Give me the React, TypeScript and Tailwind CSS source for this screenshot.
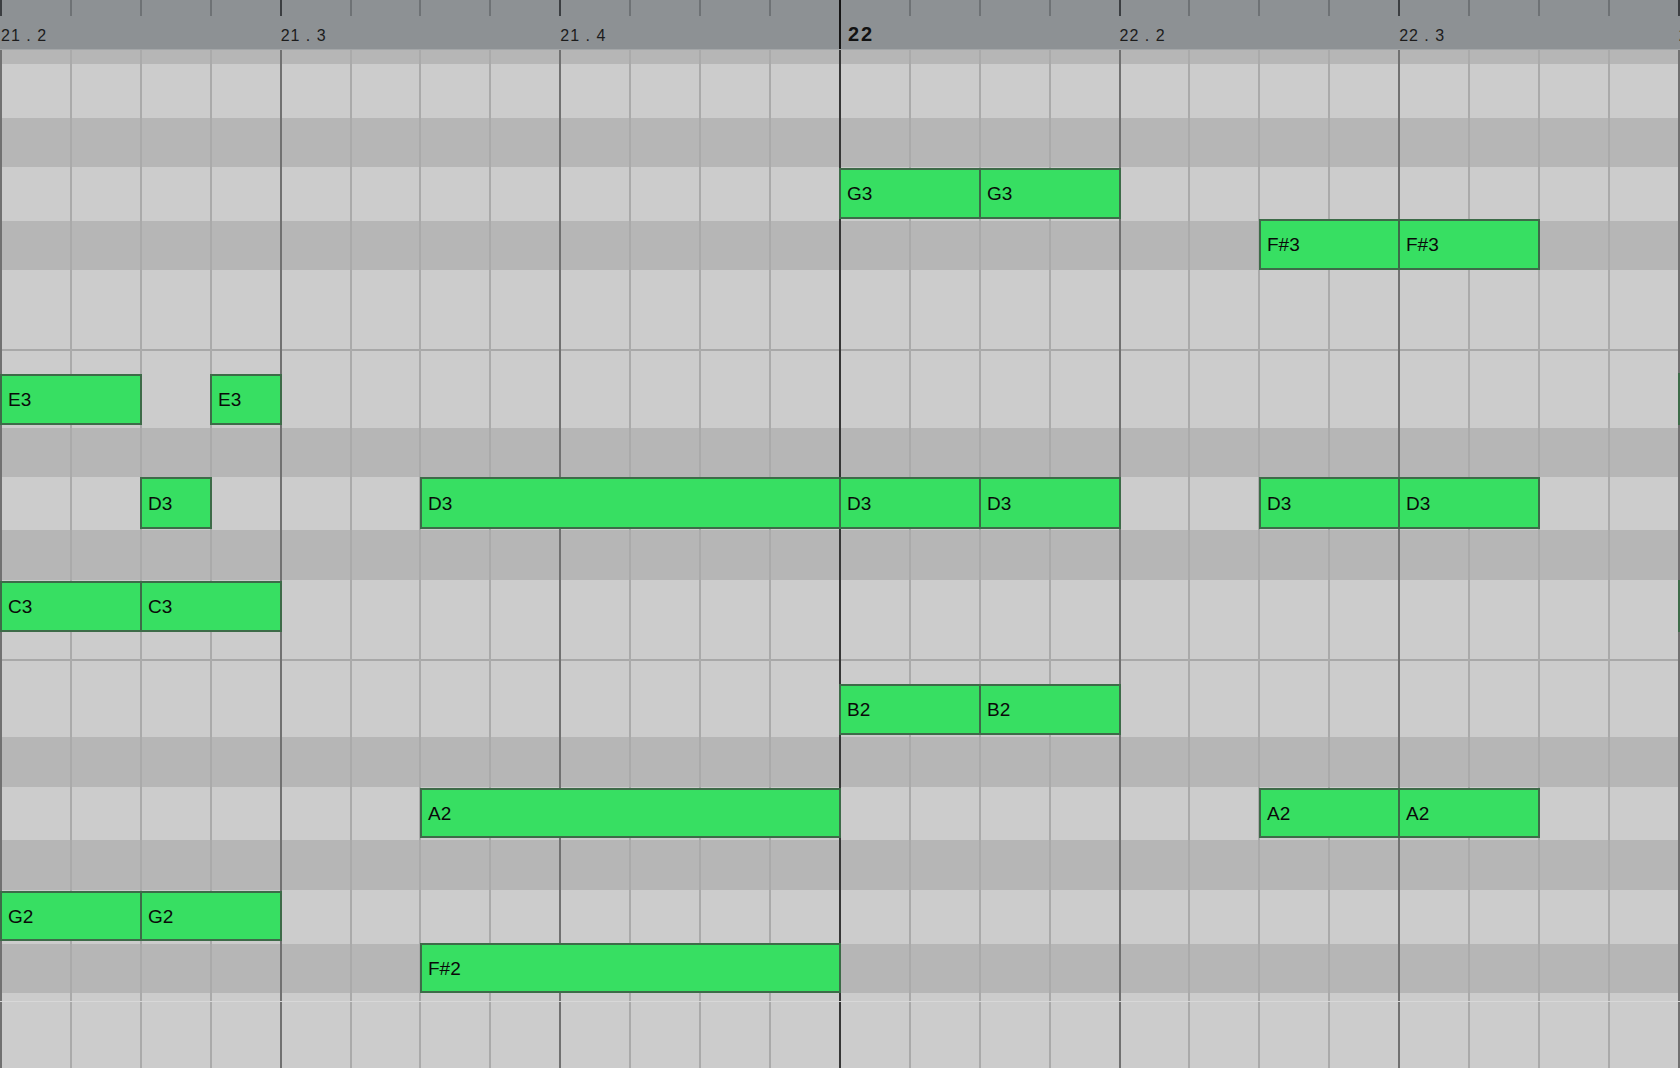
import React from 'react';

// one sixteenth on screen
const STEP = 69.92;
const COLS = Array.from({ length: 25 }, (_, i) => i);

const labels: Record<number, string> = {
    0: '21 . 2',
    4: '21 . 3',
    8: '21 . 4',
    12: '22',
    16: '22 . 2',
    20: '22 . 3',
    24: '22 . 4',
};

// pitch lanes under the ruler, top to bottom
const lanes = [
    { h: 'h-[14px]', bg: 'bg-[#b6b6b6]' },
    { h: 'h-[54px]', bg: 'bg-[#cccccc]' },
    { h: 'h-[49px]', bg: 'bg-[#b6b6b6]' },
    { h: 'h-[54px]', bg: 'bg-[#cccccc]' },
    { h: 'h-[49px]', bg: 'bg-[#b6b6b6]' },
    { h: 'h-[79px]', bg: 'bg-[#cccccc]' },
    { h: 'h-[2px]', bg: 'bg-[#a8a8a8]' },
    { h: 'h-[77px]', bg: 'bg-[#cccccc]' },
    { h: 'h-[49px]', bg: 'bg-[#b6b6b6]' },
    { h: 'h-[53px]', bg: 'bg-[#cccccc]' },
    { h: 'h-[50px]', bg: 'bg-[#b6b6b6]' },
    { h: 'h-[79px]', bg: 'bg-[#cccccc]' },
    { h: 'h-[2px]', bg: 'bg-[#a8a8a8]' },
    { h: 'h-[76px]', bg: 'bg-[#cccccc]' },
    { h: 'h-[50px]', bg: 'bg-[#b6b6b6]' },
    { h: 'h-[53px]', bg: 'bg-[#cccccc]' },
    { h: 'h-[50px]', bg: 'bg-[#b6b6b6]' },
    { h: 'h-[54px]', bg: 'bg-[#cccccc]' },
    { h: 'h-[49px]', bg: 'bg-[#b6b6b6]' },
    { h: 'h-[75px]', bg: 'bg-[#cccccc]' },
];

type Note = { name: string; start: number; end: number; top: number; h: number };

// top is measured from the top of the lane area
const notes: Note[] = [
    { name: 'G3', start: 12, end: 14, top: 118, h: 51 },
    { name: 'G3', start: 14, end: 16, top: 118, h: 51 },
    { name: 'F#3', start: 18, end: 20, top: 169, h: 51 },
    { name: 'F#3', start: 20, end: 22, top: 169, h: 51 },
    { name: 'E3', start: 0, end: 2, top: 324, h: 51 },
    { name: 'E3', start: 3, end: 4, top: 324, h: 51 },
    { name: '', start: 24, end: 26, top: 323, h: 52 },
    { name: 'D3', start: 2, end: 3, top: 427, h: 52 },
    { name: 'D3', start: 6, end: 12, top: 427, h: 52 },
    { name: 'D3', start: 12, end: 14, top: 427, h: 52 },
    { name: 'D3', start: 14, end: 16, top: 427, h: 52 },
    { name: 'D3', start: 18, end: 20, top: 427, h: 52 },
    { name: 'D3', start: 20, end: 22, top: 427, h: 52 },
    { name: 'C3', start: 0, end: 2, top: 531, h: 51 },
    { name: 'C3', start: 2, end: 4, top: 531, h: 51 },
    { name: '', start: 24, end: 26, top: 530, h: 52 },
    { name: 'B2', start: 12, end: 14, top: 634, h: 51 },
    { name: 'B2', start: 14, end: 16, top: 634, h: 51 },
    { name: 'A2', start: 6, end: 12, top: 738, h: 50 },
    { name: 'A2', start: 18, end: 20, top: 738, h: 50 },
    { name: 'A2', start: 20, end: 22, top: 738, h: 50 },
    { name: 'G2', start: 0, end: 2, top: 841, h: 50 },
    { name: 'G2', start: 2, end: 4, top: 841, h: 50 },
    { name: 'F#2', start: 6, end: 12, top: 893, h: 50 },
];

function Ruler() {
    return (
        <div className="flex h-[50px] bg-[#8d9194] border-b border-[#a3a6a8]">
            {COLS.map((i) => {
                const isBar = i === 12;
                const isBeat = i % 4 === 0;
                return (
                    <div key={i} className="relative w-[69.92px] shrink-0 h-full">
                        {isBar ? (
                            <div className="absolute left-0 top-0 w-[2px] h-full bg-[#141414]" />
                        ) : (
                            <div
                                className={
                                    isBeat
                                        ? 'absolute left-0 top-0 w-[2px] h-[16px] bg-[#3b3e41]'
                                        : 'absolute left-0 top-0 w-[2px] h-[16px] bg-[#6e7275]'
                                }
                            />
                        )}
                        {labels[i] &&
                            (isBar ? (
                                <div className="pt-[24px] pl-[9px] text-[20px] leading-[20px] font-bold tracking-[2px] text-[#111] whitespace-nowrap">
                                    {labels[i]}
                                </div>
                            ) : (
                                <div className="pt-[28px] pl-[1px] text-[16px] leading-[16px] tracking-[1px] text-[#1c1c1c] whitespace-nowrap">
                                    {labels[i]}
                                </div>
                            ))}
                    </div>
                );
            })}
        </div>
    );
}

function GridLines() {
    return (
        <div className="absolute inset-0 flex">
            {COLS.map((i) => (
                <div key={i} className="relative w-[69.92px] shrink-0 h-full">
                    <div
                        className={
                            i === 12
                                ? 'absolute left-0 top-0 w-[2px] h-full bg-[#363636]'
                                : i % 4 === 0
                                  ? 'absolute left-0 top-0 w-[2px] h-full bg-[#717171]'
                                  : 'absolute left-0 top-0 w-[2px] h-full bg-[#aaaaaa]'
                        }
                    />
                </div>
            ))}
        </div>
    );
}

function NoteBlock({ note }: { note: Note }) {
    const left = Math.round(note.start * STEP);
    const width = Math.round(note.end * STEP) - left + 2;
    return (
        <div
            className="absolute flex items-center pl-[6px] bg-[#37df62] border-2 border-[#3d6b48] text-[19px] leading-[19px] text-[#0a0a0a] whitespace-nowrap overflow-hidden"
            style={{ left, top: note.top, width, height: note.h }}
        >
            {note.name}
        </div>
    );
}

export default function App() {
    return (
        <div className="relative w-[1680px] h-[1068px] overflow-hidden bg-[#cccccc] font-['Liberation_Sans',Arial,sans-serif]">
            <Ruler />
            <div className="relative h-[1018px]">
                <div className="flex flex-col">
                    {lanes.map((lane, i) => (
                        <div key={i} className={`${lane.h} ${lane.bg}`} />
                    ))}
                </div>
                <GridLines />
                <div className="absolute left-0 right-0 top-[951px] h-px bg-[#d8d8d8]" />
                {notes.map((n, i) => (
                    <NoteBlock key={i} note={n} />
                ))}
            </div>
        </div>
    );
}
